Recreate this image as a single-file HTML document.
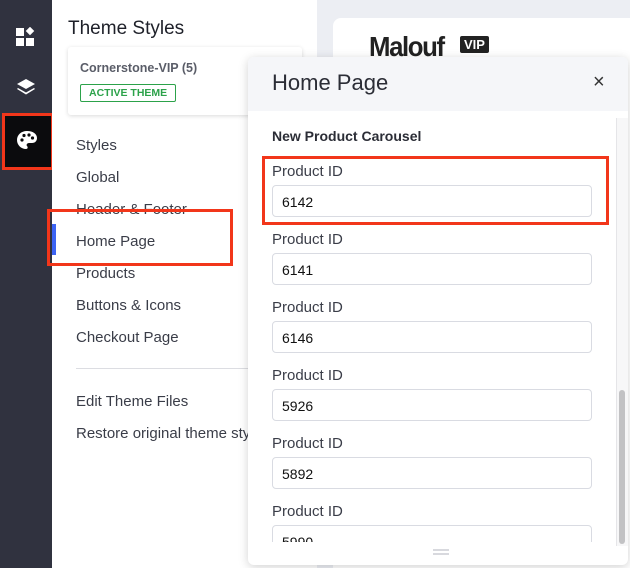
<!DOCTYPE html>
<html><head><style>
*{box-sizing:border-box;margin:0;padding:0}
html,body{width:630px;height:568px;overflow:hidden}
body{position:relative;background:#eceef3;font-family:"Liberation Sans",sans-serif;color:#313440}
.abs{position:absolute}
.side{left:0;top:0;width:52px;height:568px;background:#30323f}
.panel{left:52px;top:0;width:265px;height:568px;background:#fff}
.nav{position:absolute;left:76px;font-size:15px;color:#3a3d48}
.red{position:absolute;border:3px solid #f2361a}
.lbl{position:absolute;left:272px;font-size:15px;color:#3a3d48}
.inp{position:absolute;left:272px;width:320px;height:32px;border:1px solid #d9dbe2;border-radius:4px;background:#fff;font-size:14px;padding:8px 9px;color:#111}
</style></head><body>
<div class="abs side"></div>
<svg class="abs" style="left:16px;top:27px" width="21" height="21" viewBox="0 0 21 21"><rect x="0" y="1" width="8" height="8" fill="#fff"/><rect x="0" y="11" width="8" height="8" fill="#fff"/><rect x="10" y="11" width="8" height="8" fill="#fff"/><rect x="11" y="1" width="6" height="6" fill="#fff" transform="rotate(45 14 4)"/></svg>
<svg class="abs" style="left:16px;top:78px" width="20" height="20" viewBox="0 0 20 20"><path d="M10 1 L19 6 L10 11 L1 6Z" fill="#fff"/><path d="M2 10 L10 14.5 L18 10 L19 11 L10 16.5 L1 11Z" fill="#fff"/></svg>
<div class="abs" style="left:3px;top:115px;width:50px;height:54px;background:#0b0b0d"></div>
<svg class="abs" style="left:16px;top:130px" width="22" height="20" viewBox="0 0 22 20"><path d="M11 1C5 1 1 5 1 10c0 5 4 9 9 9 2 0 2-2 1-3s0-3 2-3h3c3 0 5-2 5-5 0-4-4-7-10-7z" fill="#fff"/><circle cx="6" cy="10" r="1.6" fill="#0b0b0d"/><circle cx="8" cy="5.5" r="1.6" fill="#0b0b0d"/><circle cx="13" cy="5" r="1.6" fill="#0b0b0d"/><circle cx="16.5" cy="8" r="1.6" fill="#0b0b0d"/></svg>
<div class="red" style="left:2px;top:113px;width:52px;height:57px"></div>

<div class="abs panel"></div>
<div class="abs" style="left:68px;top:18px;font-size:19px;color:#1e2029">Theme Styles</div>
<div class="abs" style="left:68px;top:47px;width:234px;height:68px;background:#fff;box-shadow:0 1px 4px rgba(0,0,0,.15);border-radius:3px"></div>
<div class="abs" style="left:80px;top:61px;font-size:12.5px;font-weight:bold;color:#5a5d68">Cornerstone-VIP (5)</div>
<div class="abs" style="left:80px;top:84px;border:1px solid #2ca24a;color:#2ca24a;font-size:10.5px;font-weight:bold;padding:2px 8px;border-radius:2px">ACTIVE THEME</div>
<div class="nav" style="top:137px">Styles</div>
<div class="nav" style="top:169px">Global</div>
<div class="nav" style="top:201px">Header &amp; Footer</div>
<div class="abs" style="left:52px;top:224px;width:4px;height:31px;background:#3c64f4"></div>
<div class="abs" style="left:56px;top:224px;width:176px;height:31px;background:#fff"></div>
<div class="nav" style="top:233px">Home Page</div>
<div class="red" style="left:47px;top:209px;width:186px;height:57px"></div>
<div class="nav" style="top:265px">Products</div>
<div class="nav" style="top:297px">Buttons &amp; Icons</div>
<div class="nav" style="top:329px">Checkout Page</div>
<div class="abs" style="left:76px;top:368px;width:180px;height:1px;background:#dcdde2"></div>
<div class="nav" style="top:393px">Edit Theme Files</div>
<div class="nav" style="top:425px;white-space:nowrap">Restore original theme styles</div>

<div class="abs" style="left:333px;top:18px;width:300px;height:550px;background:#fff;border-radius:8px 0 0 0"></div>
<div class="abs" style="left:369px;top:31px;font-size:28px;color:#222;letter-spacing:-1.5px;font-weight:bold;transform:scaleX(.92);transform-origin:left">Malouf</div>
<div class="abs" style="left:460px;top:36px;background:#222;color:#fff;font-size:13px;font-weight:bold;padding:1px 4px;border-radius:2px">VIP</div>

<div class="abs" style="left:248px;top:57px;width:380px;height:508px;background:#fff;border-radius:6px;box-shadow:0 2px 10px rgba(0,0,0,.18);overflow:hidden">
<div style="height:54px;background:#f5f6f9"></div>
</div>
<div class="abs" style="left:272px;top:70px;font-size:22px;color:#2b2d36">Home Page</div>
<div class="abs" style="left:593px;top:71px;font-size:20px;color:#333">×</div>
<div class="abs" style="left:616px;top:118px;width:12px;height:428px;background:#f7f7f8;border-left:1px solid #e5e5e8"></div>
<div class="abs" style="left:619px;top:390px;width:6px;height:154px;background:#c2c2c4;border-radius:3px"></div>
<div class="abs" style="left:272px;top:128px;font-size:14px;font-weight:bold;color:#2b2d36">New Product Carousel</div>
<div class="lbl" style="top:163px">Product ID</div><div class="inp" style="top:185px">6142</div>
<div class="lbl" style="top:231px">Product ID</div><div class="inp" style="top:253px">6141</div>
<div class="lbl" style="top:299px">Product ID</div><div class="inp" style="top:321px">6146</div>
<div class="lbl" style="top:367px">Product ID</div><div class="inp" style="top:389px">5926</div>
<div class="lbl" style="top:435px">Product ID</div><div class="inp" style="top:457px">5892</div>
<div class="lbl" style="top:503px">Product ID</div>
<div class="abs" style="left:272px;top:525px;width:320px;height:17px;overflow:hidden"><div class="inp" style="left:0;top:0">5990</div></div>
<div class="abs" style="left:433px;top:549px;width:16px;height:2px;background:#d8d9de"></div>
<div class="abs" style="left:433px;top:553px;width:16px;height:2px;background:#d8d9de"></div>
<div class="red" style="left:262px;top:156px;width:347px;height:69px"></div>
</body></html>
